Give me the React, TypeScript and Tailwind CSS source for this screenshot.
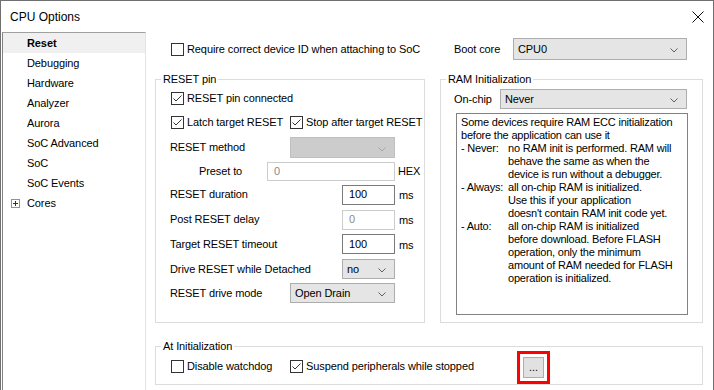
import React from "react";

const font = "font-['Liberation_Sans',Arial,sans-serif]";

function Chevron({ light }: { light?: boolean }) {
  return (
    <svg width="8" height="5" viewBox="0 0 8 5" className="shrink-0">
      <polyline points="0.5,0.5 4,4 7.5,0.5" fill="none" stroke={light ? "#a6a6a6" : "#606060"} strokeWidth="1" />
    </svg>
  );
}

function Check({ checked, label, className = "" }: { checked?: boolean; label: string; className?: string }) {
  return (
    <div className={`flex items-center gap-[3px] ${className}`}>
      <span className="w-[13px] h-[13px] border border-[#333333] bg-white flex items-center justify-center shrink-0">
        {checked && (
          <svg width="11" height="11" viewBox="0 0 11 11">
            <polyline points="1.5,5.5 4,8 9.5,2.5" fill="none" stroke="#333333" strokeWidth="1" />
          </svg>
        )}
      </span>
      <span className="whitespace-nowrap">{label}</span>
    </div>
  );
}

function Select({ value, className = "", disabled }: { value?: string; className?: string; disabled?: boolean }) {
  return (
    <div
      className={`flex items-center justify-between pl-[4px] pr-[8px] border ${
        disabled ? "bg-[#cccccc] border-[#bfbfbf]" : "bg-[#e5e5e5] border-[#adadad]"
      } ${className}`}
    >
      <span>{value}</span>
      <span className="mt-[3px]">
        <Chevron light={disabled} />
      </span>
    </div>
  );
}

function Field({ value, className = "", disabled }: { value: string; className?: string; disabled?: boolean }) {
  return (
    <div
      className={`flex items-center pl-[6px] bg-white border ${
        disabled ? "border-[#cccccc] text-[#8a8a8a]" : "border-[#7a7a7a]"
      } ${className}`}
    >
      {value}
    </div>
  );
}

const navItems = ["Reset", "Debugging", "Hardware", "Analyzer", "Aurora", "SoC Advanced", "SoC", "SoC Events"];

export default function App() {
  return (
    <div className={`w-[714px] h-[390px] overflow-hidden bg-white text-black text-[11px] tracking-[-0.1px] ${font}`}>
      <div className="h-[390px] border-l border-t border-r border-[#707070] flex flex-col">
        {/* Title bar */}
        <div className="h-[31px] flex items-center justify-between pl-[9px] pr-[9px] shrink-0">
          <span className="text-[12px] tracking-normal">CPU Options</span>
          <svg width="12" height="12" viewBox="0 0 12 12">
            <path d="M0.5 0.5 L11.5 11.5 M11.5 0.5 L0.5 11.5" stroke="#111111" strokeWidth="1" />
          </svg>
        </div>

        <div className="flex flex-1 min-h-0">
          {/* Sidebar */}
          <div className="w-[144px] ml-[1px] border-l border-t border-r border-l-[#828282] border-t-[#a0a0a0] border-r-[#e3e3e3] shrink-0">
            {navItems.map((item, i) => (
              <div
                key={item}
                className={`h-[20px] flex items-center pl-[24px] ${i === 0 ? "bg-[#f0f0f0] font-bold" : ""}`}
              >
                {item}
              </div>
            ))}
            <div className="h-[20px] flex items-center pl-[8px] gap-[7px]">
              <span className="w-[9px] h-[9px] border border-[#919191] flex items-center justify-center">
                <svg width="7" height="7" viewBox="0 0 7 7">
                  <path d="M1 3.5 H6 M3.5 1 V6" stroke="#333333" strokeWidth="1" />
                </svg>
              </span>
              <span>Cores</span>
            </div>
          </div>

          {/* Content */}
          <div className="flex-1 pl-[9px] pt-[6px]">
            <div className="flex gap-[15px] h-[22px]">
              <div className="w-[270px] flex items-center pl-[16px]">
                <Check label="Require correct device ID when attaching to SoC" />
              </div>
              <div className="w-[263px] flex items-center pl-[14px]">
                <span className="w-[59px]">Boot core</span>
                <Select value="CPU0" className="w-[174px] h-[22px]" />
              </div>
            </div>

            <div className="flex gap-[15px] mt-[12px]">
              <fieldset className="w-[270px] h-[251px] border border-[#dcdcdc]">
                <legend className="ml-[5px] px-[2px] leading-[14px]">RESET pin</legend>
                <div className="pl-[14px]">
                  <div className="h-[24px] flex items-center pl-[1px]">
                    <Check checked label="RESET pin connected" />
                  </div>
                  <div className="h-[24px] flex items-center pl-[1px]">
                    <Check checked label="Latch target RESET" className="w-[119px]" />
                    <Check checked label="Stop after target RESET" />
                  </div>
                  <div className="h-[27px] flex items-center">
                    <span className="w-[120px]">RESET method</span>
                    <Select disabled className="w-[105px] h-[21px]" />
                  </div>
                  <div className="h-[21px] flex items-center">
                    <span className="w-[68px] ml-[29px]">Preset to</span>
                    <Field disabled value="0" className="w-[128px] h-[19px]" />
                    <span className="ml-[3px]">HEX</span>
                  </div>
                  <div className="h-[25px] flex items-center">
                    <span className="w-[172px]">RESET duration</span>
                    <Field value="100" className="w-[53px] h-[20px]" />
                    <span className="ml-[4px] mt-[2px]">ms</span>
                  </div>
                  <div className="h-[25px] flex items-center">
                    <span className="w-[172px]">Post RESET delay</span>
                    <Field disabled value="0" className="w-[53px] h-[20px]" />
                    <span className="ml-[4px] mt-[2px]">ms</span>
                  </div>
                  <div className="h-[24px] flex items-center">
                    <span className="w-[172px]">Target RESET timeout</span>
                    <Field value="100" className="w-[53px] h-[20px]" />
                    <span className="ml-[4px] mt-[2px]">ms</span>
                  </div>
                  <div className="h-[26px] flex items-center">
                    <span className="w-[172px]">Drive RESET while Detached</span>
                    <Select value="no" className="w-[53px] h-[20px]" />
                  </div>
                  <div className="h-[22px] flex items-center">
                    <span className="w-[120px]">RESET drive mode</span>
                    <Select value="Open Drain" className="w-[105px] h-[20px]" />
                  </div>
                </div>
              </fieldset>

              <fieldset className="w-[263px] h-[251px] border border-[#dcdcdc]">
                <legend className="ml-[5px] px-[2px] leading-[14px]">RAM Initialization</legend>
                <div className="mt-[3px] h-[20px] flex items-center pl-[13px]">
                  <span className="w-[46px]">On-chip</span>
                  <Select value="Never" className="w-[187px] h-[20px]" />
                </div>
                <div className="ml-[15px] mt-[4px] w-[232px] h-[202px] border border-[#828282] pl-[4px] pt-[2px] leading-[13px] tracking-[-0.2px] whitespace-nowrap">
                  <div>Some devices require RAM ECC initialization</div>
                  <div>before the application can use it</div>
                  <div className="flex">
                    <span className="w-[47px]">- Never:</span>
                    <div>
                      <div>no RAM init is performed. RAM will</div>
                      <div>behave the same as when the</div>
                      <div>device is run without a debugger.</div>
                    </div>
                  </div>
                  <div className="flex">
                    <span className="w-[47px]">- Always:</span>
                    <div>
                      <div>all on-chip RAM is initialized.</div>
                      <div>Use this if your application</div>
                      <div>doesn't contain RAM init code yet.</div>
                    </div>
                  </div>
                  <div className="flex">
                    <span className="w-[47px]">- Auto:</span>
                    <div>
                      <div>all on-chip RAM is initialized</div>
                      <div>before download. Before FLASH</div>
                      <div>operation, only the minimum</div>
                      <div>amount of RAM needed for FLASH</div>
                      <div>operation is initialized.</div>
                    </div>
                  </div>
                </div>
              </fieldset>
            </div>

            <fieldset className="w-[548px] h-[46px] mt-[16px] border border-[#dcdcdc]">
              <legend className="ml-[5px] px-[2px] leading-[14px]">At Initialization</legend>
              <div className="flex items-start pl-[15px]">
                <Check label="Disable watchdog" className="w-[119px] mt-[5px]" />
                <Check checked label="Suspend peripherals while stopped" className="w-[233px] mt-[5px]" />
                <button className="w-[21px] h-[21px] mt-[4px] bg-[#e1e1e1] border border-[#adadad] flex items-end justify-center pb-[4px] leading-none outline-[3px] outline-solid outline-[#ff0000] outline-offset-[3px]">
                  ...
                </button>
              </div>
            </fieldset>
          </div>
        </div>
      </div>
    </div>
  );
}
